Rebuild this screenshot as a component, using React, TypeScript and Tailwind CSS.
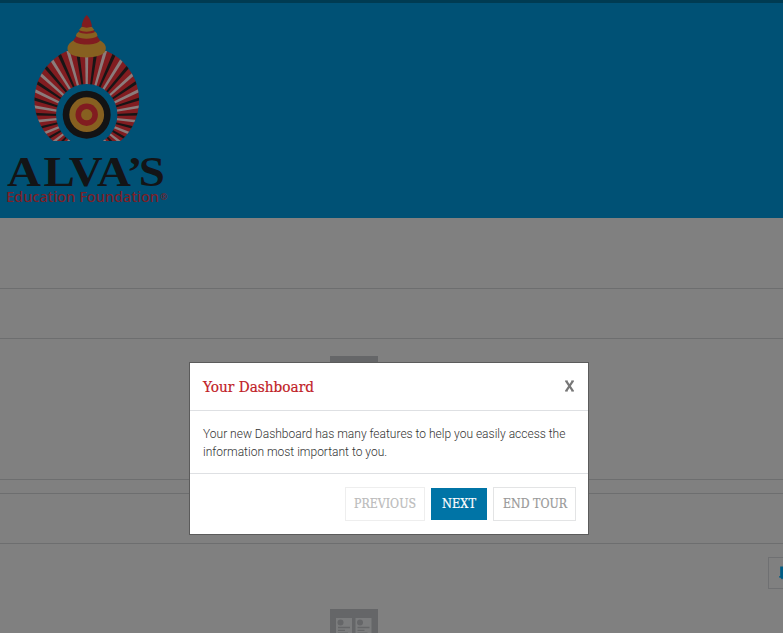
import React from "react";

const CX = 86.7;
const CY = 116;

function ray(angle: number, inner: number, outer: number) {
  const a = (angle * Math.PI) / 180;
  const point = (x: number, r: number) =>
    `${(CX + x * Math.cos(a) + r * Math.sin(a)).toFixed(2)},${(CY + x * Math.sin(a) - r * Math.cos(a)).toFixed(2)}`;
  return [point(-inner, 24), point(-outer, 72), point(outer, 72), point(inner, 24)].join(" ");
}

const whiteRays = Array.from({ length: 19 }, (_, i) => (i - 9) * 16);
const blackRays = Array.from({ length: 18 }, (_, i) => (i - 9) * 16 + 8);

function Logo() {
  return (
    <svg width="180" height="215" viewBox="0 3 180 215" className="block" aria-label="Alva's Education Foundation">
      <defs>
        <clipPath id="crest">
          <path d="M53 141 A53.8 53.8 0 0 1 67 51 L106.5 51 A53.8 53.8 0 0 1 120.6 141 Z" />
        </clipPath>
      </defs>
      <g clipPath="url(#crest)">
        <rect x="30" y="45" width="115" height="97" fill="#811c20" />
        {whiteRays.map((a) => (
          <polygon key={a} points={ray(a, 1, 1.7)} fill="#8b7c7c" />
        ))}
        {blackRays.map((a) => (
          <polygon key={a} points={ray(a, 0.8, 1.8)} fill="#171516" />
        ))}
        <circle cx={CX} cy="114.7" r="30.7" fill="#005175" />
      </g>
      <circle cx={CX} cy="114.7" r="24" fill="#131314" />
      <circle cx={CX} cy="114.7" r="17.4" fill="#876020" />
      <circle cx={CX} cy="114.7" r="11.2" fill="#811c20" />
      <circle cx={CX} cy="114.7" r="5.6" fill="#876020" />
      <path d="M73.5 40.5 H100 C105 43 107 47 105.3 51 C102 59.5 71 59.5 68 51 C66.5 47 68.5 43 73.5 40.5Z" fill="#876020" />
      <path d="M76.5 36 H97 L100 40.5 C97 45.8 76.5 45.8 73.3 40.5Z" fill="#811c20" />
      <path d="M79 31.5 H95 Q97.5 33 97.5 36 C93 39.5 80 39.5 75.8 36 Q76 33 79 31.5Z" fill="#876020" />
      <path d="M80 30 H93.5 L95 32 C91 34.3 82 34.3 78.7 32Z" fill="#811c20" />
      <path d="M81.5 27 H92 L94.3 30 C90 32.2 83 32.2 79 30Z" fill="#876020" />
      <path d="M86.7 15 C90 18 91.2 22 92 26.5 Q86.7 28.8 81.5 26.5 C82.3 22 83.5 18 86.7 15Z" fill="#811c20" />
      <text transform="scale(1.12 1)" x="6.3 38.8 61.5 86.6 113.2 124" y="186" fill="#131416" className="font-['Liberation_Serif',serif] text-[42px] font-bold">
        ALVA’S
      </text>
      <text x="6" y="202" textLength="153" lengthAdjust="spacingAndGlyphs" fill="#7c2028" className="font-['Noto_Sans','Open_Sans',sans-serif] text-[15px] font-medium">
        Education Foundation
      </text>
      <text x="160" y="200" fill="#7c2028" className="font-['Open_Sans',sans-serif] text-[9px] font-semibold">
        ®
      </text>
    </svg>
  );
}

function CourseIcon() {
  return (
    <svg width="48" height="48" viewBox="0 0 48 48" className="block shrink-0">
      <rect width="48" height="48" fill="#656668" />
      {[6, 25.5].map((x) => (
        <g key={x} transform={`translate(${x} 9)`}>
          <rect width="16" height="30" fill="#7b7c7d" />
          <circle cx="4.5" cy="4.5" r="3" fill="#656668" />
          <path d="M2 9.5h12M2 12.3h7M2 15.1h10" stroke="#656668" strokeWidth="1.3" />
        </g>
      ))}
    </svg>
  );
}

function SlabText({ children, width, size }: { children: string; width: number; size: "title" | "button" }) {
  return (
    <svg width={width} height="20" className="block overflow-visible">
      <text
        x="0"
        y={size === "title" ? 15 : 14}
        textLength={width}
        lengthAdjust="spacingAndGlyphs"
        fill="currentColor"
        stroke="currentColor"
        strokeWidth="0.2"
        className={
          size === "title"
            ? "font-['DejaVu_Serif',serif] text-[14px]"
            : "font-['DejaVu_Serif',serif] text-[12px]"
        }
      >
        {children}
      </text>
    </svg>
  );
}

function TourDialog() {
  return (
    <section
      role="dialog"
      className="absolute left-[189px] top-[362px] h-[173px] w-[400px] border border-[#5b5b5b] bg-white font-[Roboto,sans-serif]"
    >
      <header className="flex h-12 items-center justify-between border-b border-[#dee0e3] pl-[13px] pr-[13px] text-[#bf2026]">
        <SlabText width={111} size="title">Your Dashboard</SlabText>
        <button aria-label="Close" className="pb-[2px] text-[#777]">
          <svg width="11" height="12" viewBox="0 0 11 12" className="block">
            <path d="M2.2 1.2 L8.8 10.8 M8.8 1.2 L2.2 10.8" stroke="currentColor" strokeWidth="2.2" />
            <path d="M1 1.2h2.6M7.4 1.2h2.6M1 10.8h2.6M7.4 10.8h2.6" stroke="currentColor" strokeWidth="1.2" />
          </svg>
        </button>
      </header>
      <p className="h-[63px] border-b border-[#dee0e3] px-[13px] pt-[14px] text-[12px] font-light leading-[18px] text-[#333]">
        Your new Dashboard has many features to help you easily access the information most important to you.
      </p>
      <footer className="flex items-center justify-end gap-[6px] pr-3 pt-[13px]">
        <button className="flex h-[34px] w-20 items-center justify-center border border-[#eee] text-[#bbb]">
          <SlabText width={62} size="button">PREVIOUS</SlabText>
        </button>
        <button className="flex h-8 w-14 items-center justify-center bg-[#0074a6] text-white">
          <SlabText width={34} size="button">NEXT</SlabText>
        </button>
        <button className="flex h-[34px] w-[83px] items-center justify-center border border-[#e3e4e5] text-[#999]">
          <SlabText width={64} size="button">END TOUR</SlabText>
        </button>
      </footer>
    </section>
  );
}

export default function App() {
  return (
    <div className="relative h-[633px] w-[783px] overflow-hidden bg-[#808080]">
      <header className="h-[218px] border-t-[3px] border-[#003b52] bg-[#005175]">
        <Logo />
      </header>
      <div className="h-[71px] border-b border-[#6d6e6f]" />
      <div className="h-[50px] border-b border-[#6d6e6f]" />
      <div className="flex h-[141px] border-b border-[#6d6e6f] pl-[330px] pt-[17px]">
        <CourseIcon />
      </div>
      <div className="h-[14px] border-b border-[#6d6e6f]" />
      <div className="h-[50px] border-b border-[#6d6e6f]" />
      <div className="flex h-[89px] items-start">
        <div className="ml-[330px] mt-[65px]">
          <CourseIcon />
        </div>
        <button className="ml-[390px] mt-[13px] flex h-8 w-10 shrink-0 items-center border border-[#6f7072] pl-[10px] text-[#005d85]">
          <svg width="14" height="14" viewBox="0 0 14 14">
            <path d="M1.2 .5v9.8H0v1.2h1.2L3 13.5l1.8-2H6v-1.2H4.2V.5z" fill="currentColor" />
            <path d="M8 2h2M8 6h4M8 10h6" stroke="currentColor" strokeWidth="2" />
          </svg>
        </button>
      </div>
      <TourDialog />
    </div>
  );
}
